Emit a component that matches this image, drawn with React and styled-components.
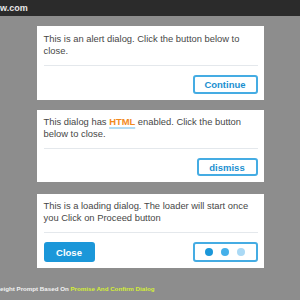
import React from 'react';
import styled, { createGlobalStyle } from 'styled-components';

const Global = createGlobalStyle`
  html, body {
    margin: 0;
    padding: 0;
    background: #8d8d8d;
    font-family: Arial, "Liberation Sans", sans-serif;
  }
`;

const Page = styled.div`
  width: 300px;
  height: 300px;
  overflow: hidden;
  display: flex;
  flex-direction: column;
`;

const TopBar = styled.div`
  height: 16px;
  background: #2b2b2b;
  color: #e8e8e8;
  font-size: 9px;
  font-weight: bold;
  line-height: 16px;
  white-space: nowrap;
`;

const Stack = styled.div`
  display: flex;
  flex-direction: column;
  align-items: center;
  gap: 10px;
  padding-top: 10px;
`;

const Dialog = styled.div`
  width: 214px;
  background: #fff;
  padding: ${(p) => p.$top || 7}px 6px 6px 7px;
`;

const Message = styled.p`
  margin: 0;
  font-size: 9.4px;
  line-height: 11.5px;
  color: #474747;
`;

const Rule = styled.div`
  height: 1px;
  background: #e4e8ec;
  margin: ${(p) => p.$space || 9}px 0;
`;

const Actions = styled.div`
  display: flex;
  justify-content: ${(p) => (p.$split ? 'space-between' : 'flex-end')};
  align-items: center;
`;

const Button = styled.button`
  box-sizing: border-box;
  width: ${(p) => p.$w}px;
  height: ${(p) => p.$h || 19}px;
  padding: 0;
  border: 2px solid ${(p) => (p.$fill ? '#1b97d9' : '#45ace3')};
  border-radius: 3px;
  background: ${(p) => (p.$fill ? '#1b97d9' : '#fff')};
  color: ${(p) => (p.$fill ? '#fff' : '#1b8fd0')};
  font-family: Arial, "Liberation Sans", sans-serif;
  font-size: 9.5px;
  font-weight: bold;
  display: flex;
  align-items: center;
  justify-content: center;
  gap: 8px;
`;

const Dot = styled.span`
  width: 8px;
  height: 8px;
  border-radius: 50%;
  background: ${(p) => p.$c};
`;

const Html = styled.b`
  color: #f28a1e;
  text-decoration: underline;
  text-decoration-color: #b5dcf4;
  text-decoration-thickness: 2px;
  text-underline-offset: 2px;
`;

const Footer = styled.div`
  margin-top: 17px;
  font-size: 6.2px;
  line-height: 8px;
  font-weight: bold;
  color: #f2f2f2;
  white-space: nowrap;
`;

const Link = styled.span`
  color: #d4ef34;
`;

export default function App() {
  return (
    <Page>
      <Global />
      <TopBar>w.com</TopBar>
      <Stack>
        <Dialog>
          <Message>This is an alert dialog. Click the button below to close.</Message>
          <Rule />
          <Actions>
            <Button $w={65}>Continue</Button>
          </Actions>
        </Dialog>
        <Dialog $top={6}>
          <Message>
            This dialog has <Html>HTML</Html> enabled. Click the button below to close.
          </Message>
          <Rule />
          <Actions>
            <Button $w={61} $h={18}>dismiss</Button>
          </Actions>
        </Dialog>
        <Dialog $top={6} style={{ marginTop: 2 }}>
          <Message>
            This is a loading dialog. The loader will start once you Click on Proceed button
          </Message>
          <Rule />
          <Actions $split>
            <Button $fill $w={51} $h={20}>Close</Button>
            <Button $w={65} $h={20}>
              <Dot $c="#1b97d9" />
              <Dot $c="#45b0ea" />
              <Dot $c="#aad9f5" />
            </Button>
          </Actions>
        </Dialog>
      </Stack>
      <Footer>
        eight Prompt Based On <Link>Promise And Confirm Dialog</Link>
      </Footer>
    </Page>
  );
}
